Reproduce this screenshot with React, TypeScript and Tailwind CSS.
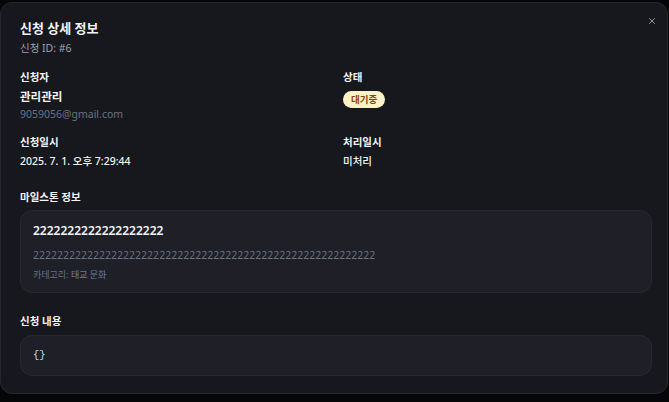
import { X } from "lucide-react";

const font = { fontFamily: '"Noto Sans", "Noto Sans CJK KR", sans-serif' };

export default function App() {
  return (
    <div className="h-[402px] w-[669px] bg-[#060608] pt-[2px]" style={font}>
      <div className="relative h-[392px] w-[668px] rounded-xl border border-[#262730] bg-[#17181d] pl-[19px] pr-[15px] pt-[13px]">
        <button className="absolute right-[10px] top-[13px] text-gray-400">
          <X size={10} strokeWidth={2.2} />
        </button>

        <h1 className="text-[13px] font-bold leading-6 text-gray-100">신청 상세 정보</h1>
        <p className="text-[10.5px] leading-4 text-gray-400">신청 ID: #6</p>

        <div className="mt-[13px] grid grid-cols-2 gap-x-[14px]">
          <div>
            <div className="text-[10.5px] font-semibold leading-4 text-gray-100">신청자</div>
            <div className="mt-[3px] text-[11.5px] font-bold leading-[18px] text-gray-100">관리관리</div>
            <div className="text-[10.5px] leading-4 text-gray-500">9059056@gmail.com</div>
          </div>
          <div>
            <div className="text-[10.5px] font-semibold leading-4 text-gray-100">상태</div>
            <span className="mt-[5px] inline-block rounded-full bg-[#fef3c7] px-2 py-0.5 text-[9.5px] font-bold leading-[13px] text-[#92400e]">
              대기중
            </span>
          </div>

          <div className="mt-[12px]">
            <div className="text-[10.5px] font-semibold leading-4 text-gray-100">신청일시</div>
            <div className="mt-[3px] text-[10.5px] font-medium leading-4 text-gray-100">2025. 7. 1. 오후 7:29:44</div>
          </div>
          <div className="mt-[12px]">
            <div className="text-[10.5px] font-semibold leading-4 text-gray-100">처리일시</div>
            <div className="mt-[3px] text-[10.5px] font-medium leading-4 text-gray-100">미처리</div>
          </div>
        </div>

        <div className="mt-5 text-[10.5px] font-semibold leading-4 text-gray-100">마일스톤 정보</div>
        <div className="mt-[5px] rounded-xl border border-[#272833] bg-[#1e1f27] px-3 pb-[9px] pt-[10px]">
          <div className="text-[12px] font-semibold leading-5 text-gray-100">2222222222222222222</div>
          <div className="mt-[6px] text-[10.5px] leading-4 text-gray-500">
            222222222222222222222222222222222222222222222222222222222
          </div>
          <div className="mt-[4px] text-[9px] leading-4 text-gray-500">
            카테고리: <span className="text-[#6b7fa6]">태교 문화</span>
          </div>
        </div>

        <div className="mt-[20px] text-[10.5px] font-semibold leading-4 text-gray-100">신청 내용</div>
        <div className="mt-[6px] rounded-xl border border-[#272833] bg-[#1e1f27] px-3 pb-[12px] pt-[11px]">
          <pre className="font-mono text-[10.5px] leading-4 text-blue-200">{"{}"}</pre>
        </div>
      </div>
    </div>
  );
}
